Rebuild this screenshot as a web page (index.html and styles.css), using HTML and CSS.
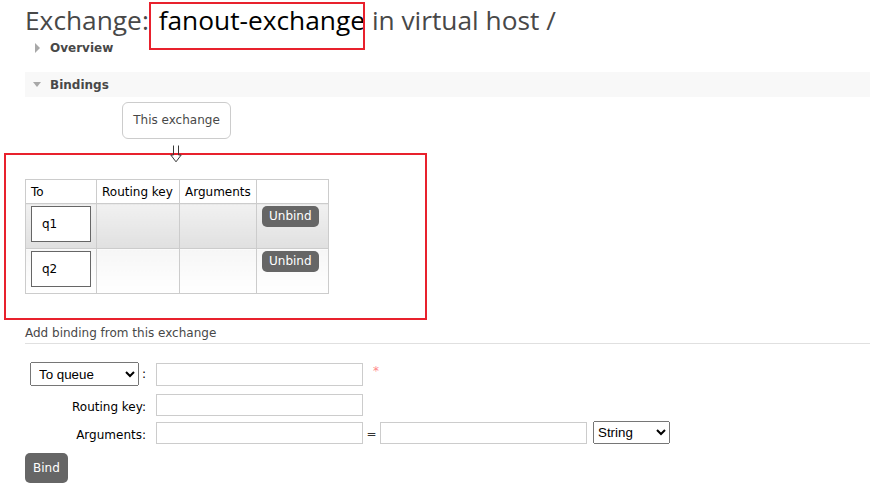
FILE: index.html
```html
<!DOCTYPE html>
<html>
<head>
<meta charset="utf-8">
<link rel="stylesheet" href="styles.css">
</head>
<body>
<div class="page">
  <h1 class="title">Exchange: <span class="hl">fanout-exchange</span> in virtual host /</h1>
  <div class="section closed"><span class="tri-right"></span>Overview</div>
  <div class="section open"><span class="tri-down"></span>Bindings</div>
  <div class="source">
    <div class="this-ex">This exchange</div>
    <div class="arrow"><svg width="12" height="18" viewBox="0 0 12 18"><path d="M3.5 0.5 V10 H0.8 L6 16.8 L11.2 10 H8.5 V0.5" fill="none" stroke="#3a3a3a" stroke-width="1"/></svg></div>
  </div>
  <div class="redbox">
    <table class="list">
      <colgroup><col class="c1"><col class="c2"><col class="c3"><col class="c4"></colgroup>
      <thead>
        <tr><th>To</th><th>Routing key</th><th>Arguments</th><th></th></tr>
      </thead>
      <tbody>
        <tr class="alt1">
          <td><div class="qbox">q1</div></td><td></td><td></td>
          <td><button class="btn unbind">Unbind</button></td>
        </tr>
        <tr class="alt2">
          <td><div class="qbox">q2</div></td><td></td><td></td>
          <td><button class="btn unbind">Unbind</button></td>
        </tr>
      </tbody>
    </table>
  </div>
  <h3 class="subhead">Add binding from this exchange</h3>
  <div class="form">
    <div class="row r1">
      <div class="label"><select class="sel-dest"><option>To queue</option><option>To exchange</option></select><span class="colon">:</span></div>
      <input class="txt" type="text">
      <span class="req">*</span>
    </div>
    <div class="row r2">
      <div class="label">Routing key:</div>
      <input class="txt" type="text">
    </div>
    <div class="row r3">
      <div class="label">Arguments:</div>
      <input class="txt" type="text">
      <span class="eq">=</span>
      <input class="txt" type="text">
      <select class="sel-type"><option>String</option><option>Number</option><option>Boolean</option></select>
    </div>
    <button class="btn bind">Bind</button>
  </div>
</div>
</body>
</html>
```
FILE: styles.css
```css
html, body {
  margin: 0;
  padding: 0;
  background: #fff;
}
body {
  font-family: "DejaVu Sans", Verdana, sans-serif;
  font-size: 12px;
  color: #484848;
}
.page {
  padding-left: 25px;
}
.title {
  margin: 0;
  padding-top: 1px;
  font-family: "Open Sans", "Noto Sans", sans-serif;
  font-weight: normal;
  font-size: 26.3px;
  line-height: 39px;
  color: #484848;
  height: 38px;
}
.hl {
  position: relative;
  color: #000;
  margin-left: 3px;
}
.hl::after {
  content: "";
  position: absolute;
  left: -10px;
  right: 0;
  top: 0;
  bottom: -12px;
  border: 2px solid #e8212d;
}
.section {
  display: flex;
  align-items: center;
  font-weight: bold;
  color: #484848;
  height: 25px;
}
.section.closed {
  height: 18px;
  margin-bottom: 15px;
}
.section.open {
  background: #f8f8f8;
}
.tri-right {
  width: 0;
  height: 0;
  border-top: 5px solid transparent;
  border-bottom: 5px solid transparent;
  border-left: 5px solid #a8a8a8;
  margin-left: 10px;
  margin-right: 10px;
}
.tri-down {
  width: 0;
  height: 0;
  border-left: 4px solid transparent;
  border-right: 4px solid transparent;
  border-top: 5px solid #a8a8a8;
  margin-left: 8px;
  margin-right: 9px;
}
.source {
  width: 303px;
  display: flex;
  flex-direction: column;
  align-items: center;
  padding-top: 5px;
}
.this-ex {
  border: 1px solid #ccc;
  border-radius: 6px;
  padding: 0 10px;
  height: 35px;
  line-height: 35px;
  color: #484848;
}
.arrow {
  position: relative;
  z-index: 1;
  height: 14px;
  padding-top: 6px;
  box-sizing: border-box;
  margin-left: -1px;
}
.arrow svg {
  display: block;
}
.redbox {
  margin-left: -21px;
  width: 423px;
  border: 2px solid #e8212d;
  padding: 24px 0 0 19px;
  box-sizing: border-box;
  height: 167px;
}
table.list {
  border-collapse: collapse;
  table-layout: fixed;
  width: 303px;
  color: #000;
}
col.c1 { width: 71px; }
col.c2 { width: 83px; }
col.c3 { width: 77px; }
col.c4 { width: 72px; }
table.list th {
  font-weight: normal;
  text-align: left;
  border: 1px solid #ccc;
  height: 23px;
  padding: 0 5px;
  background: #fff;
}
table.list td {
  border: 1px solid #ccc;
  padding: 2px 5px 0 5px;
  height: 42px;
  vertical-align: top;
}
tr.alt1 td {
  background: linear-gradient(#f1f1f1, #e0e0e0);
}
tr.alt2 td {
  background: linear-gradient(#f6f6f6, #fff);
}
.qbox {
  width: 48px;
  height: 34px;
  line-height: 34px;
  border: 1px solid #666;
  background: #fff;
  padding-left: 10px;
  color: #000;
}
.btn {
  font-family: "DejaVu Sans", Verdana, sans-serif;
  font-size: 12px;
  color: #fff;
  background: #666;
  border: none;
  margin: 0;
  cursor: pointer;
}
.unbind {
  height: 21px;
  padding: 0 7px;
  border-radius: 5px;
  line-height: 21px;
}
.subhead {
  margin: 5px 0 0 0;
  font-weight: normal;
  font-size: 12px;
  line-height: 16px;
  color: #484848;
  padding-bottom: 2px;
  border-bottom: 1px solid #e0e0e0;
}
.form {
  padding-top: 18px;
}
.row {
  display: flex;
  align-items: center;
}
.label {
  width: 121px;
  display: flex;
  justify-content: flex-end;
  align-items: center;
  color: #000;
  margin-right: 10px;
}
.r1 { height: 24px; }
.r2 { height: 22px; margin-top: 8px; }
.r3 { height: 23px; margin-top: 5px; }
.r2 .label, .r3 .label { padding-top: 4px; }
.colon {
  margin-left: 3px;
  width: 4px;
}
.sel-dest {
  width: 109px;
  height: 24px;
  padding-left: 4px;
  font-family: "Liberation Sans", Arial, sans-serif;
  font-size: 13.33px;
  color: #000;
  margin: 0;
}
.txt {
  width: 207px;
  height: 22px;
  box-sizing: border-box;
  border: 1px solid #ccc;
  margin: 0;
  padding: 0 3px;
}
.r1 .txt { height: 23px; }
.req {
  color: #f88;
  margin-left: 10px;
  margin-top: -7px;
}
.eq {
  color: #333;
  width: 17px;
  text-align: center;
  padding-top: 3px;
}
.sel-type {
  width: 77px;
  height: 23px;
  margin: 0 0 0 6px;
  font-family: "Liberation Sans", Arial, sans-serif;
  font-size: 13.33px;
  color: #000;
}
.bind {
  margin-top: 9px;
  height: 30px;
  padding: 0 8px;
  border-radius: 5px;
}
```
